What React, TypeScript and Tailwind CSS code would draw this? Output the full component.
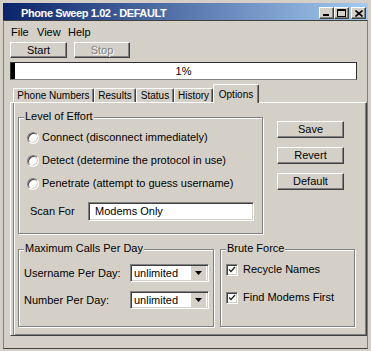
import React from "react";

const raised =
  "bg-[#d4d0c8] border border-t-white border-l-white border-r-[#404040] border-b-[#404040] shadow-[inset_-1px_-1px_0_#808080]";
const sunken =
  "bg-white border border-t-[#808080] border-l-[#808080] border-r-white border-b-white shadow-[inset_1px_1px_0_#404040,inset_-1px_-1px_0_#d4d0c8]";
const etched =
  "relative border border-[#808080] shadow-[inset_1px_1px_0_#fff,1px_1px_0_#fff]";

function Btn({ label, disabled, className }: { label: string; disabled?: boolean; className: string }) {
  return (
    <div className={`${raised} ${className} flex items-center justify-center`}>
      <span className={disabled ? "text-[#808080] [text-shadow:1px_1px_0_#fff]" : "text-black"}>{label}</span>
    </div>
  );
}

function Radio({ label }: { label: string }) {
  return (
    <div className="h-[23px] flex items-center pl-[8px]">
      <div className="w-[12px] h-[12px] rounded-full bg-white border border-t-[#808080] border-l-[#808080] border-r-white border-b-white shadow-[inset_1px_1px_0_#404040,inset_-1px_-1px_0_#d4d0c8]" />
      <span className="ml-[3px] whitespace-nowrap">{label}</span>
    </div>
  );
}

function Check({ label, className }: { label: string; className?: string }) {
  return (
    <div className={`flex items-center h-[13px] pl-[5px] ${className ?? ""}`}>
      <div className="w-[12px] h-[12px] bg-white border border-t-[#808080] border-l-[#808080] border-r-white border-b-white shadow-[inset_1px_1px_0_#404040,inset_-1px_-1px_0_#d4d0c8] flex items-center justify-center">
        <svg width="8" height="7" viewBox="0 0 8 7">
          <path d="M1 3.5 L3 5.5 L7 1" stroke="#222" strokeWidth="1.3" fill="none" />
        </svg>
      </div>
      <span className="ml-[5px] whitespace-nowrap">{label}</span>
    </div>
  );
}

function Select({ value }: { value: string }) {
  return (
    <div className={`${sunken} w-[79px] h-[18px] flex items-center p-[2px]`}>
      <span className="flex-1 pl-[1px] leading-[13px]">{value}</span>
      <div className="w-[15px] h-[14px] bg-[#d4d0c8] flex items-center justify-center">
        <svg width="7" height="4" viewBox="0 0 7 4">
          <path d="M0 0 H7 L3.5 4 Z" fill="#000" />
        </svg>
      </div>
    </div>
  );
}

function Group({ label, className, children }: { label: string; className: string; children?: React.ReactNode }) {
  return (
    <div className={`${etched} ${className}`}>
      <span className="absolute left-[5px] top-[-8px] px-[1px] bg-[#d4d0c8] leading-[13px] whitespace-nowrap">{label}</span>
      {children}
    </div>
  );
}

function Tab({ label, w, selected }: { label: string; w: string; selected?: boolean }) {
  return (
    <div
      className={`${w} ${
        selected ? "h-[19px] mb-[-1px] relative z-10" : "h-[14px]"
      } bg-[#d4d0c8] border-l border-t border-r border-l-white border-t-white border-r-[#404040] shadow-[inset_-1px_0_0_#808080] rounded-t-[2px] flex items-center justify-center whitespace-nowrap text-[10px]`}
    >
      {label}
    </div>
  );
}

export default function App() {
  return (
    <div className="w-[371px] h-[351px] bg-[#d4d0c8] overflow-hidden pl-[3px] pt-[3px] font-['Liberation_Sans',Arial,sans-serif] text-[11px] leading-[13px] text-black">
      {/* Title bar */}
      <div className="w-[365px] h-[17px] bg-[linear-gradient(to_right,#0a246a,#a6caf0)] flex">
        <div className="pl-[18px] pt-[4px] text-white font-bold tracking-[-0.4px] whitespace-nowrap">
          Phone Sweep 1.02 - DEFAULT
        </div>
        <div className="ml-auto mt-[4px] mr-[2px] flex">
          <div className={`${raised} w-[15px] h-[12px] flex items-end justify-center pb-[2px]`}>
            <div className="w-[6px] h-[2px] bg-black ml-[-2px]" />
          </div>
          <div className={`${raised} w-[15px] h-[12px] flex items-center justify-center`}>
            <div className="w-[9px] h-[8px] border border-black border-t-2" />
          </div>
          <div className={`${raised} ml-[2px] w-[15px] h-[12px] flex items-center justify-center`}>
            <svg width="8" height="7" viewBox="0 0 8 7">
              <path d="M0.5 0.5 L7.5 6.5 M7.5 0.5 L0.5 6.5" stroke="#000" strokeWidth="1.6" />
            </svg>
          </div>
        </div>
      </div>

      {/* Client area */}
      <div className="w-[365px] h-[329px] border border-t-[#404040] border-l-[#808080] border-r-[#808080] border-b-[#404040]">
        {/* Menu */}
        <div className="h-[19px] pt-[5px] pl-[7px] flex">
          <span className="w-[26px]">File</span>
          <span className="w-[31px]">View</span>
          <span>Help</span>
        </div>

        {/* Toolbar */}
        <div className="mt-[2px] ml-[6px] flex gap-[7px]">
          <Btn label="Start" className="w-[57px] h-[16px]" />
          <Btn label="Stop" disabled className="w-[56px] h-[16px]" />
        </div>

        {/* Progress */}
        <div className="mt-[4px] ml-[6px] w-[347px] h-[18px] bg-white border border-[#303030] border-b-[#808080] flex relative">
          <div className="w-[4px] h-full bg-black" />
          <div className="flex-1 flex items-center justify-center pr-[4px]">1%</div>
        </div>

        {/* Tabs */}
        <div className="mt-[4px] ml-[6px] h-[18px] flex items-end pl-[3px]">
          <Tab label="Phone Numbers" w="w-[81px]" />
          <Tab label="Results" w="w-[42px]" />
          <Tab label="Status" w="w-[38px]" />
          <Tab label="History" w="w-[39px]" />
          <Tab label="Options" w="w-[46px]" selected />
        </div>

        {/* Panel */}
        <div className="ml-[6px] w-[357px] h-[234px] border border-l-white border-t-white border-r-[#404040] border-b-[#404040] shadow-[inset_2px_0_0_#d4d0c8,inset_3px_0_0_#808080,inset_4px_0_0_#fff,inset_-1px_-1px_0_#808080]">
          <div className="mt-[14px] ml-[7px] flex">
            <Group label="Level of Effort" className="w-[245px] h-[117px]">
              <div className="pt-[8px]">
                <Radio label="Connect (disconnect immediately)" />
                <Radio label="Detect (determine the protocol in use)" />
                <Radio label="Penetrate (attempt to guess username)" />
                <div className="mt-[7px] pl-[11px] flex items-center">
                  <span className="w-[58px]">Scan For</span>
                  <div className={`${sunken} w-[166px] h-[19px] flex items-center pl-[6px]`}>Modems Only</div>
                </div>
              </div>
            </Group>
            <div className="ml-[14px] mt-[4px] flex flex-col gap-[9px]">
              <Btn label="Save" className="w-[67px] h-[17px]" />
              <Btn label="Revert" className="w-[67px] h-[17px]" />
              <Btn label="Default" className="w-[67px] h-[17px]" />
            </div>
          </div>

          <div className="mt-[15px] ml-[7px] flex gap-[6px]">
            <Group label="Maximum Calls Per Day" className="w-[196px] h-[78px]">
              <div className="pt-[14px] pl-[5px] flex flex-col gap-[9px]">
                <div className="flex items-center">
                  <span className="w-[106px]">Username Per Day:</span>
                  <Select value="unlimited" />
                </div>
                <div className="flex items-center">
                  <span className="w-[106px]">Number Per Day:</span>
                  <Select value="unlimited" />
                </div>
              </div>
            </Group>
            <Group label="Brute Force" className="w-[135px] h-[78px]">
              <div className="pt-[13px] flex flex-col gap-[15px]">
                <Check label="Recycle Names" />
                <Check label="Find Modems First" />
              </div>
            </Group>
          </div>
        </div>
      </div>
    </div>
  );
}
